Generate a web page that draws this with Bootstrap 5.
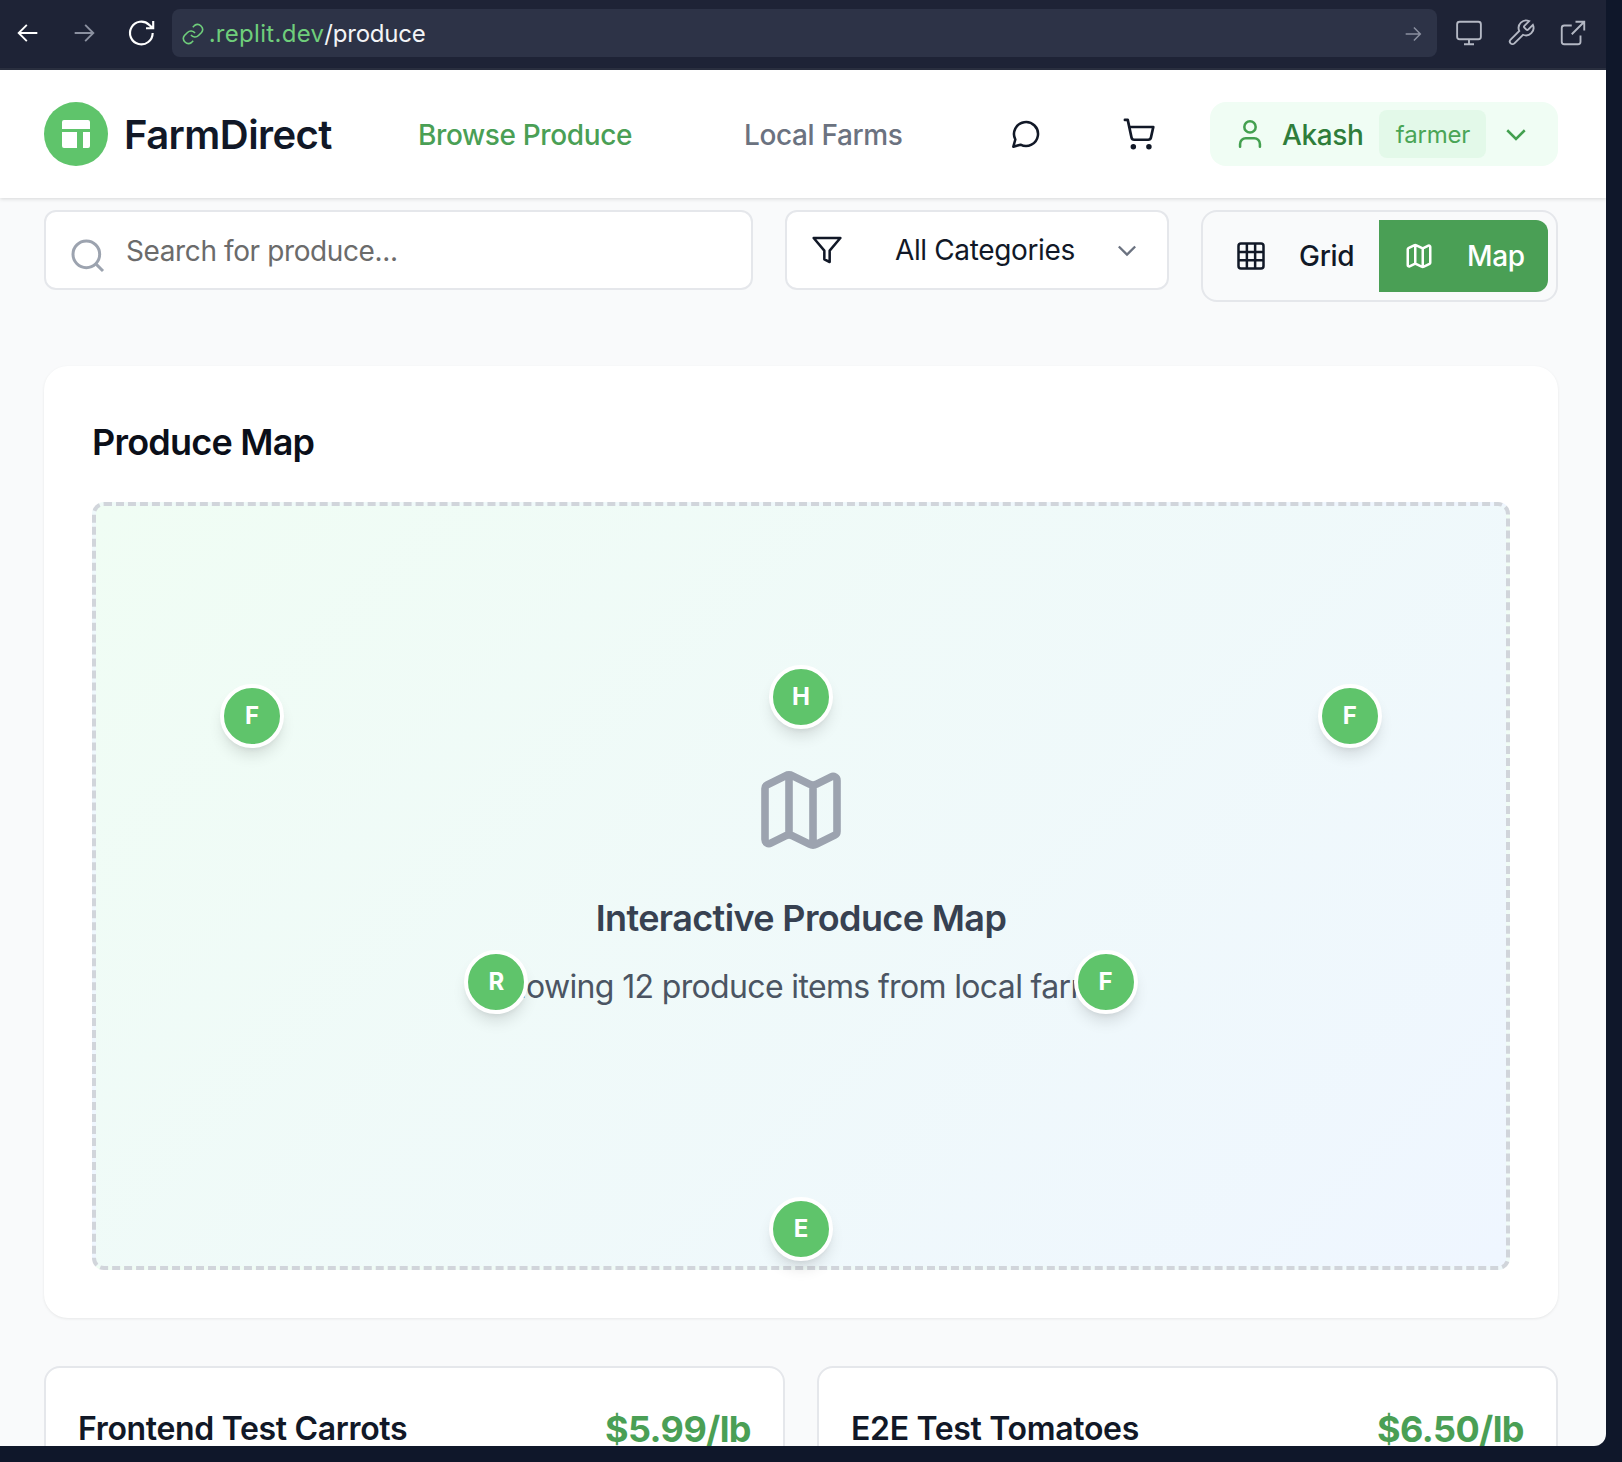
<!DOCTYPE html>
<html>
<head>
    <title>FarmDirect</title>
    <link href="https://cdn.jsdelivr.net/npm/bootstrap@5.3.0/dist/css/bootstrap.min.css" rel="stylesheet">
    <style>
        html, body { height: 1462px; overflow: hidden; }
        body { background: #0f172a; font-family: Inter, "Liberation Sans", sans-serif; color: #111827; }
        .app-window { width: 1606px; height: 1446px; overflow: hidden; background: #f9fafb; border-bottom-right-radius: 12px; }

        .browser-bar { height: 70px; background: #1e2336; border-bottom: 2px solid #2b3040; padding: 9px 18px 11px 14px; }
        .bar-icons-left { gap: 28px; width: 158px; }
        .address-box { width: 1268px; height: 48px; background: #2d3347; border-radius: 8px; padding: 1px 13px 0 9px; font-size: 24px; letter-spacing: -0.2px; color: #f3f4f6; }
        .url-host { color: #6fce7b; letter-spacing: 0.3px; }
        .bar-icons-right { gap: 22px; margin-left: 17px; }

        .top-nav { height: 128px; background: #fff; padding: 0 48px 0 44px; box-shadow: 0 1px 4px rgba(0,0,0,.14); position: relative; }
        .logo-dot { width: 64px; height: 64px; border-radius: 50%; background: #5fc46b; }
        .logo-text { font-size: 40px; font-weight: 600; letter-spacing: -0.55px; color: #111827; margin-left: 16px; width: 294px; padding-top: 1px; }
        .nav-item-link { font-size: 28px; font-weight: 500; letter-spacing: -0.37px; color: #6b7280; text-decoration: none; padding-top: 1px; }
        .nav-item-link.on { color: #4a9f55; }
        .link-one { width: 326px; }
        .link-two { width: 266px; }
        .icon-one { width: 112px; }
        .icon-two { width: 88px; }
        .user-pill { width: 348px; height: 64px; background: #f0fdf4; border-radius: 16px; padding: 0 0 0 23px; }
        .user-name { font-size: 28px; font-weight: 500; letter-spacing: -0.37px; color: #2f7d3b; margin-left: 15px; padding-top: 1px; }
        .role-chip { flex: 0 0 107px; height: 48px; background: #e3f9e9; border-radius: 8px; font-size: 24px; letter-spacing: -0.2px; color: #4aa556; margin-left: 16px; margin-right: 15px; padding-top: 1px; }

        .page-body { padding: 12px 48px 0 44px; }
        .filter-box { height: 80px; background: #fff; border: 2px solid #e5e7eb; border-radius: 12px; }
        .search-box { width: 709px; padding: 0 22px; font-size: 28px; letter-spacing: -0.39px; color: #6b6b6b; }
        .search-icon { margin: 12px 18px 0 0; }
        .search-label { padding-top: 2px; }
        .cat-box { width: 384px; margin-left: 32px; padding: 0 26px 0 24px; font-size: 28px; letter-spacing: -0.37px; color: #111827; }
        .cat-label { margin-left: 52px; }
        .view-toggle { width: 357px; height: 92px; margin-left: 32px; background: #f9fafb; border: 2px solid #e5e7eb; border-radius: 16px; padding: 8px; }
        .view-btn { height: 72px; font-size: 28px; font-weight: 500; letter-spacing: -0.3px; border: 0; border-radius: 0; gap: 33px; }
        .grid-btn { width: 168px; padding: 0 0 0 25px; color: #111827; background: transparent; }
        .map-btn { width: 169px; padding: 0 0 0 25px; color: #fff; background: #4a9f55; border-radius: 0 12px 12px 0; }
        .map-btn:hover { background: #4a9f55; color: #fff; }

        .map-card { height: 952px; margin-top: 64px; border: 0; border-radius: 24px; box-shadow: 0 1px 3px rgba(0,0,0,.08); padding: 48px; }
        .map-title { font-size: 36px; font-weight: 600; letter-spacing: -0.78px; line-height: 54px; padding-top: 1px; margin-bottom: 33px; color: #0b0f19; }
        .map-area { height: 768px; position: relative; border: 4px dashed #d1d5db; border-radius: 12px; background: linear-gradient(135deg, #f0fdf4 0%, #eff6ff 100%); }
        .map-inner { padding-top: 256px; }
        .map-heading { font-size: 36px; font-weight: 600; letter-spacing: -0.63px; color: #374151; margin: 33px 0 0 0; line-height: 54px; }
        .map-note { font-size: 32px; letter-spacing: -0.65px; color: #4b5563; margin: 18px 0 0 0; line-height: 48px; }
        .map-pin { position: absolute; width: 64px; height: 64px; margin: -31px 0 0 -32px; border: 4px solid #fff; border-radius: 50%; background: #5fc46b; color: #fff; font-size: 24px; font-weight: 700; box-shadow: 0 10px 15px -3px rgba(0,0,0,.12), 0 4px 6px -4px rgba(0,0,0,.1); }

        .list-grid { margin-top: 48px; gap: 32px; }
        .item-tile { flex: 1 1 0; height: 200px; border: 2px solid #e5e7eb; border-radius: 16px; padding: 37px 32px; }
        .tile-name { font-size: 32px; font-weight: 600; letter-spacing: -0.33px; color: #111827; line-height: 48px; }
        .tile-price { font-size: 36px; font-weight: 700; letter-spacing: -0.55px; color: #4a9f55; line-height: 48px; }
    </style>
</head>
<body>
<div class="app-window">

    <div class="browser-bar d-flex align-items-center">
        <div class="bar-icons-left d-flex align-items-center">
            <svg width="28" height="28" viewBox="0 0 24 24" fill="none" stroke="#fff" stroke-width="1.6"><path d="M20 12H4M11 5l-7 7 7 7"/></svg>
            <svg width="28" height="28" viewBox="0 0 24 24" fill="none" stroke="#8b90a0" stroke-width="1.6"><path d="M4 12h16M13 5l7 7-7 7"/></svg>
            <svg width="32" height="32" viewBox="0 0 24 24" fill="none" stroke="#fff" stroke-width="1.6"><path d="M20 12a8.5 8.5 0 1 1-2.6-6.1L20 8.2M20.4 3v5.4H15"/></svg>
        </div>
        <div class="address-box d-flex align-items-center">
            <svg width="24" height="24" viewBox="0 0 24 24" fill="none" stroke="#6fce7b" stroke-width="1.6" class="me-1"><path d="M10 13a5 5 0 0 0 7.5.5l3-3a5 5 0 0 0-7-7l-1.7 1.7"/><path d="M14 11a5 5 0 0 0-7.5-.5l-3 3a5 5 0 0 0 7 7l1.7-1.7"/></svg>
            <span><span class="url-host">.replit.dev</span>/produce</span>
            <svg width="22" height="22" viewBox="0 0 24 24" fill="none" stroke="#8b90a0" stroke-width="1.6" class="ms-auto"><path d="M4 12h16M13 5l7 7-7 7"/></svg>
        </div>
        <div class="bar-icons-right d-flex align-items-center">
            <svg width="30" height="30" viewBox="0 0 24 24" fill="none" stroke="#b4b8c4" stroke-width="1.5"><rect x="2.5" y="3" width="19" height="14" rx="2"/><path d="M12 17v4M8 21h8"/></svg>
            <svg width="30" height="30" viewBox="0 0 24 24" fill="none" stroke="#b4b8c4" stroke-width="1.5"><path d="M14.7 6.3a1 1 0 0 0 0 1.4l1.6 1.6a1 1 0 0 0 1.4 0l3.8-3.8a6 6 0 0 1-7.9 7.9l-6.9 6.9a2.1 2.1 0 0 1-3-3l6.9-6.9a6 6 0 0 1 7.9-7.9z"/></svg>
            <svg width="30" height="30" viewBox="0 0 24 24" fill="none" stroke="#b4b8c4" stroke-width="1.5"><path d="M18 14v5a2 2 0 0 1-2 2H5a2 2 0 0 1-2-2V8a2 2 0 0 1 2-2h6M14 3h7v7M11 13L21 3"/></svg>
        </div>
    </div>

    <nav class="top-nav d-flex align-items-center">
        <div class="logo-dot d-flex align-items-center justify-content-center">
            <svg width="28" height="28" viewBox="0 0 28 28" fill="#fff"><path d="M2 0h24a2 2 0 0 1 2 2v7H0V2a2 2 0 0 1 2-2zM0 12h15v16H2a2 2 0 0 1-2-2zM21 12h7v14a2 2 0 0 1-2 2h-5z"/></svg>
        </div>
        <div class="logo-text">FarmDirect</div>
        <a class="nav-item-link on link-one" href="#">Browse Produce</a>
        <a class="nav-item-link link-two" href="#">Local Farms</a>
        <div class="icon-one">
            <svg width="32" height="32" viewBox="0 0 24 24" fill="none" stroke="#111827" stroke-width="1.9" stroke-linejoin="round"><path d="M7.9 20A9 9 0 1 0 4 16.1L2.5 21.5z"/></svg>
        </div>
        <div class="icon-two">
            <svg width="34" height="34" viewBox="0 0 24 24" fill="none" stroke="#111827" stroke-width="1.9" stroke-linecap="round" stroke-linejoin="round"><circle cx="8" cy="21" r="1"/><circle cx="19" cy="21" r="1"/><path d="M2.05 2.05h2l2.66 12.42a2 2 0 0 0 2 1.58h9.78a2 2 0 0 0 1.95-1.57l1.65-7.43H5.12"/></svg>
        </div>
        <div class="user-pill d-flex align-items-center">
            <svg width="34" height="34" viewBox="0 0 24 24" fill="none" stroke="#43a04f" stroke-width="1.8" stroke-linecap="round"><path d="M19 21v-2a4 4 0 0 0-4-4H9a4 4 0 0 0-4 4v2"/><circle cx="12" cy="7" r="4"/></svg>
            <span class="user-name">Akash</span>
            <span class="role-chip d-flex align-items-center justify-content-center">farmer</span>
            <svg width="30" height="30" viewBox="0 0 24 24" fill="none" stroke="#43a04f" stroke-width="2"><path d="M5 9l7 7 7-7"/></svg>
        </div>
    </nav>

    <div class="page-body">
        <div class="d-flex align-items-start">
            <div class="filter-box search-box d-flex align-items-center">
                <svg width="40" height="40" viewBox="0 0 24 24" fill="none" stroke="#9ca3af" stroke-width="1.8" class="search-icon"><circle cx="11" cy="11" r="8"/><path d="M21 21l-4.3-4.3"/></svg>
                <span class="search-label">Search for produce...</span>
            </div>
            <div class="filter-box cat-box d-flex align-items-center">
                <svg width="32" height="32" viewBox="0 0 24 24" fill="none" stroke="#111827" stroke-width="1.9" stroke-linejoin="round"><path d="M22 3H2l8 9.5V19l4 2v-8.5z"/></svg>
                <span class="cat-label">All Categories</span>
                <svg width="28" height="28" viewBox="0 0 24 24" fill="none" stroke="#6b7280" stroke-width="2" class="ms-auto"><path d="M5 9l7 7 7-7"/></svg>
            </div>
            <div class="view-toggle d-flex">
                <button class="btn view-btn grid-btn d-flex align-items-center">
                    <svg width="30" height="30" viewBox="0 0 24 24" fill="none" stroke="#111827" stroke-width="2"><rect x="2" y="2" width="20" height="20" rx="2"/><path d="M2 8.7h20M2 15.3h20M8.7 2v20M15.3 2v20"/></svg>
                    Grid
                </button>
                <button class="btn view-btn map-btn d-flex align-items-center">
                    <svg width="30" height="30" viewBox="0 0 24 24" fill="none" stroke="#fff" stroke-width="2" stroke-linejoin="round"><path d="M14.106 5.553a2 2 0 0 0 1.788 0l3.659-1.83A1 1 0 0 1 21 4.619v12.764a1 1 0 0 1-.553.894l-4.553 2.277a2 2 0 0 1-1.788 0l-4.212-2.106a2 2 0 0 0-1.788 0l-3.659 1.83A1 1 0 0 1 3 19.381V6.618a1 1 0 0 1 .553-.894l4.553-2.277a2 2 0 0 1 1.788 0zM15 5.764v15M9 3.236v15"/></svg>
                    Map
                </button>
            </div>
        </div>

        <div class="card map-card">
            <div class="map-title">Produce Map</div>
            <div class="map-area text-center">
                <div class="map-inner">
                    <svg width="96" height="96" viewBox="0 0 24 24" fill="none" stroke="#9ca3af" stroke-width="1.9" stroke-linejoin="round" class="d-block mx-auto"><path d="M14.106 5.553a2 2 0 0 0 1.788 0l3.659-1.83A1 1 0 0 1 21 4.619v12.764a1 1 0 0 1-.553.894l-4.553 2.277a2 2 0 0 1-1.788 0l-4.212-2.106a2 2 0 0 0-1.788 0l-3.659 1.83A1 1 0 0 1 3 19.381V6.618a1 1 0 0 1 .553-.894l4.553-2.277a2 2 0 0 1 1.788 0zM15 5.764v15M9 3.236v15"/></svg>
                    <div class="map-heading">Interactive Produce Map</div>
                    <div class="map-note">Showing 12 produce items from local farms</div>
                </div>
                <div class="map-pin d-flex align-items-center justify-content-center" style="left: 11.07%; top: 27.5%">F</div>
                <div class="map-pin d-flex align-items-center justify-content-center" style="left: 50%; top: 25%">H</div>
                <div class="map-pin d-flex align-items-center justify-content-center" style="left: 88.93%; top: 27.5%">F</div>
                <div class="map-pin d-flex align-items-center justify-content-center" style="left: 28.4%; top: 62.5%">R</div>
                <div class="map-pin d-flex align-items-center justify-content-center" style="left: 71.6%; top: 62.5%">F</div>
                <div class="map-pin d-flex align-items-center justify-content-center" style="left: 50%; top: 95%">E</div>
            </div>
        </div>

        <div class="list-grid d-flex">
            <div class="card item-tile">
                <div class="d-flex justify-content-between">
                    <span class="tile-name">Frontend Test Carrots</span>
                    <span class="tile-price">$5.99/lb</span>
                </div>
            </div>
            <div class="card item-tile">
                <div class="d-flex justify-content-between">
                    <span class="tile-name">E2E Test Tomatoes</span>
                    <span class="tile-price">$6.50/lb</span>
                </div>
            </div>
        </div>
    </div>
</div>
<script src="https://cdn.jsdelivr.net/npm/bootstrap@5.3.0/dist/js/bootstrap.bundle.min.js"></script>
</body>
</html>
